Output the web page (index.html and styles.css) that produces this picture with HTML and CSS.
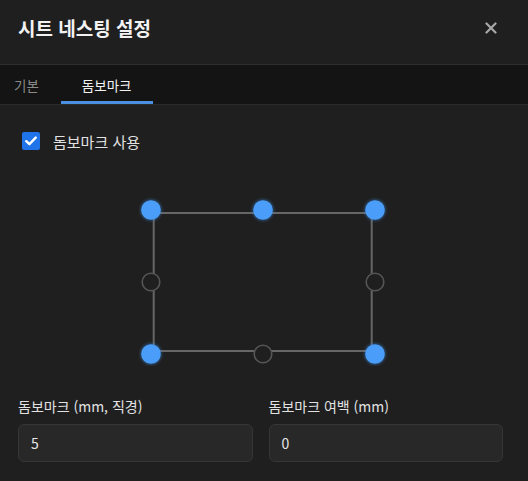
FILE: index.html
```html
<!DOCTYPE html>
<html lang="ko">
<head>
<meta charset="utf-8">
<link rel="stylesheet" href="styles.css">
</head>
<body>
<div class="dialog">
  <header class="header">
    <h1 class="title">시트 네스팅 설정</h1>
    <button class="close" aria-label="닫기">
      <svg width="12" height="12" viewBox="0 0 12 12"><path d="M1.5 1.5L10.5 10.5M10.5 1.5L1.5 10.5" stroke="#a8a8a8" stroke-width="2.2" stroke-linecap="round"/></svg>
    </button>
  </header>
  <nav class="tabs">
    <div class="tab tab-first">기본</div>
    <div class="tab active">돔보마크</div>
  </nav>
  <main class="body">
    <label class="check-row">
      <span class="checkbox">
        <svg width="12" height="10" viewBox="0 0 12 10"><path d="M1.3 5.2L4.4 8.2L10.7 1.6" fill="none" stroke="#fff" stroke-width="2.4" stroke-linecap="round" stroke-linejoin="round"/></svg>
      </span>
      <span class="check-label">돔보마크 사용</span>
    </label>
    <div class="diagram">
      <svg width="250" height="170" viewBox="0 0 250 170">
        <defs>
          <filter id="glow" x="-50%" y="-50%" width="200%" height="200%">
            <feGaussianBlur stdDeviation="1.6"/>
          </filter>
        </defs>
        <rect x="14.7" y="17" width="218" height="138" fill="none" stroke="#666" stroke-width="2"/>
        <g fill="#1f1f1f" stroke="#555" stroke-width="1.6">
          <circle cx="12" cy="86" r="8.8"/>
          <circle cx="236" cy="86" r="8.8"/>
          <circle cx="124" cy="158" r="8.8"/>
        </g>
        <g fill="#3d8fe8" opacity="0.55" filter="url(#glow)">
          <circle cx="12" cy="14" r="10.5"/>
          <circle cx="124" cy="14" r="10.5"/>
          <circle cx="236" cy="14" r="10.5"/>
          <circle cx="12" cy="158" r="10.5"/>
          <circle cx="236" cy="158" r="10.5"/>
        </g>
        <g fill="#4a9df8">
          <circle cx="12" cy="14" r="9.8"/>
          <circle cx="124" cy="14" r="9.8"/>
          <circle cx="236" cy="14" r="9.8"/>
          <circle cx="12" cy="158" r="9.8"/>
          <circle cx="236" cy="158" r="9.8"/>
        </g>
      </svg>
    </div>
    <div class="fields">
      <div class="field">
        <div class="field-label">돔보마크 (mm, 직경)</div>
        <div class="input">5</div>
      </div>
      <div class="field">
        <div class="field-label">돔보마크 여백 (mm)</div>
        <div class="input">0</div>
      </div>
    </div>
  </main>
</div>
</body>
</html>
```
FILE: styles.css
```css
* { box-sizing: border-box; }
html, body {
  margin: 0;
  padding: 0;
  background: #1f1f1f;
}
body {
  font-family: "Noto Sans CJK KR", "Noto Sans", "Liberation Sans", sans-serif;
  color: #e6e6e6;
  width: 528px;
  height: 481px;
  overflow: hidden;
}
.dialog {
  display: flex;
  flex-direction: column;
}
.header {
  height: 65px;
  border-bottom: 1px solid #2e2e2e;
  display: flex;
  justify-content: space-between;
  align-items: flex-start;
  padding: 15px 30px 0 18px;
}
.title {
  margin: 0;
  font-size: 19px;
  font-weight: 700;
  line-height: 26px;
  color: #f2f2f2;
}
.close {
  background: none;
  border: 0;
  padding: 0;
  margin-top: 6px;
  width: 14px;
  height: 14px;
  display: flex;
  align-items: center;
  justify-content: center;
}
.tabs {
  height: 40px;
  background: #141414;
  border-bottom: 1px solid #2a2a2a;
  display: flex;
}
.tab {
  height: 39px;
  padding: 0 21px;
  font-size: 13.5px;
  line-height: 39px;
  color: #8a8a8a;
  border-bottom: 3px solid transparent;
  padding-top: 1px;
}
.tab-first {
  padding-left: 14px;
  padding-right: 22px;
}
.tab.active {
  color: #f2f2f2;
  border-bottom-color: #4a8fe0;
}
.body {
  padding: 27px 25px 0 18px;
}
.check-row {
  display: flex;
  align-items: center;
  gap: 13px;
  padding-left: 4px;
  height: 18px;
}
.checkbox {
  width: 18px;
  height: 18px;
  border-radius: 2px;
  background: #1e74e8;
  display: flex;
  align-items: center;
  justify-content: center;
}
.check-label {
  font-size: 15px;
  color: #e2e2e2;
}
.diagram {
  display: flex;
  justify-content: center;
  margin-top: 46px;
  padding-left: 7px;
}
.diagram svg { display: block; }
.fields {
  margin-top: 30px;
  display: grid;
  grid-template-columns: 1fr 1fr;
  gap: 16px;
}
.field-label {
  font-size: 14px;
  line-height: 20px;
  color: #e2e2e2;
  margin-bottom: 8px;
}
.input {
  height: 38px;
  background: #282828;
  border: 1px solid #363636;
  border-radius: 6px;
  padding: 0 12px;
  font-size: 14px;
  line-height: 36px;
  color: #e6e6e6;
}
```
